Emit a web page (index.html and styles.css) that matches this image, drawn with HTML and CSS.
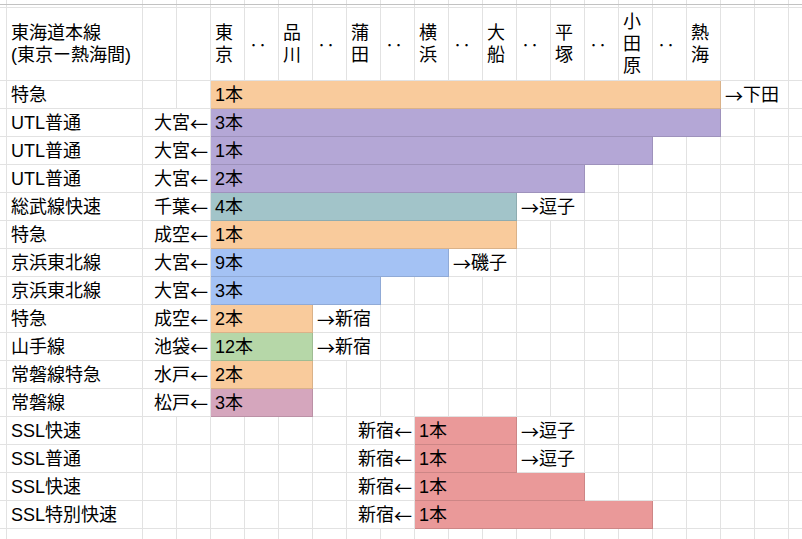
FILE: index.html
```html
<!DOCTYPE html>
<html lang="ja">
<head>
<meta charset="utf-8">
<title>東海道本線</title>
<link rel="stylesheet" href="styles.css">
</head>
<body>
<div class="sheet">
  <div class="row row-top"></div>
  <div class="row row-gap"></div>
  <div class="row row-head">
    <div class="cell hcell lbl"><span>東海道本線<br>(東京ー熱海間)</span></div>
    <div class="cell hcell first-station"><span>東<br>京</span></div>
    <div class="cell hcell"><span class="dots">‥</span></div>
    <div class="cell hcell"><span>品<br>川</span></div>
    <div class="cell hcell"><span class="dots">‥</span></div>
    <div class="cell hcell"><span>蒲<br>田</span></div>
    <div class="cell hcell"><span class="dots">‥</span></div>
    <div class="cell hcell"><span>横<br>浜</span></div>
    <div class="cell hcell"><span class="dots">‥</span></div>
    <div class="cell hcell"><span>大<br>船</span></div>
    <div class="cell hcell"><span class="dots">‥</span></div>
    <div class="cell hcell"><span>平<br>塚</span></div>
    <div class="cell hcell"><span class="dots">‥</span></div>
    <div class="cell hcell"><span>小<br>田<br>原</span></div>
    <div class="cell hcell"><span class="dots">‥</span></div>
    <div class="cell hcell"><span>熱<br>海</span></div>
  </div>

  <div class="row">
    <div class="cell lbl">特急</div>
    <div class="cell bar orange from-tokyo to-atami">1本</div>
    <div class="cell cover dest-atami"><span class="arrow">→</span>下田</div>
  </div>
  <div class="row">
    <div class="cell lbl">UTL普通</div>
    <div class="cell right cover src">大宮<span class="arrow">←</span></div>
    <div class="cell bar purple from-tokyo to-atami">3本</div>
  </div>
  <div class="row">
    <div class="cell lbl">UTL普通</div>
    <div class="cell right cover src">大宮<span class="arrow">←</span></div>
    <div class="cell bar purple from-tokyo to-odawara">1本</div>
  </div>
  <div class="row">
    <div class="cell lbl">UTL普通</div>
    <div class="cell right cover src">大宮<span class="arrow">←</span></div>
    <div class="cell bar purple from-tokyo to-hiratsuka">2本</div>
  </div>
  <div class="row">
    <div class="cell lbl">総武線快速</div>
    <div class="cell right cover src">千葉<span class="arrow">←</span></div>
    <div class="cell bar teal from-tokyo to-ofuna">4本</div>
    <div class="cell cover dest-ofuna"><span class="arrow">→</span>逗子</div>
  </div>
  <div class="row">
    <div class="cell lbl">特急</div>
    <div class="cell right cover src">成空<span class="arrow">←</span></div>
    <div class="cell bar orange from-tokyo to-ofuna">1本</div>
  </div>
  <div class="row">
    <div class="cell lbl">京浜東北線</div>
    <div class="cell right cover src">大宮<span class="arrow">←</span></div>
    <div class="cell bar blue from-tokyo to-yokohama">9本</div>
    <div class="cell cover dest-yokohama"><span class="arrow">→</span>磯子</div>
  </div>
  <div class="row">
    <div class="cell lbl">京浜東北線</div>
    <div class="cell right cover src">大宮<span class="arrow">←</span></div>
    <div class="cell bar blue from-tokyo to-kamata">3本</div>
  </div>
  <div class="row">
    <div class="cell lbl">特急</div>
    <div class="cell right cover src">成空<span class="arrow">←</span></div>
    <div class="cell bar orange from-tokyo to-shinagawa">2本</div>
    <div class="cell cover dest-shinagawa"><span class="arrow">→</span>新宿</div>
  </div>
  <div class="row">
    <div class="cell lbl">山手線</div>
    <div class="cell right cover src">池袋<span class="arrow">←</span></div>
    <div class="cell bar green from-tokyo to-shinagawa">12本</div>
    <div class="cell cover dest-shinagawa"><span class="arrow">→</span>新宿</div>
  </div>
  <div class="row">
    <div class="cell lbl">常磐線特急</div>
    <div class="cell right cover src">水戸<span class="arrow">←</span></div>
    <div class="cell bar orange from-tokyo to-shinagawa">2本</div>
  </div>
  <div class="row">
    <div class="cell lbl">常磐線</div>
    <div class="cell right cover src">松戸<span class="arrow">←</span></div>
    <div class="cell bar pink from-tokyo to-shinagawa">3本</div>
  </div>
  <div class="row">
    <div class="cell lbl">SSL快速</div>
    <div class="cell right cover src-shinjuku">新宿<span class="arrow">←</span></div>
    <div class="cell bar red from-yokohama to-ofuna">1本</div>
    <div class="cell cover dest-ofuna"><span class="arrow">→</span>逗子</div>
  </div>
  <div class="row">
    <div class="cell lbl">SSL普通</div>
    <div class="cell right cover src-shinjuku">新宿<span class="arrow">←</span></div>
    <div class="cell bar red from-yokohama to-ofuna">1本</div>
    <div class="cell cover dest-ofuna"><span class="arrow">→</span>逗子</div>
  </div>
  <div class="row">
    <div class="cell lbl">SSL快速</div>
    <div class="cell right cover src-shinjuku">新宿<span class="arrow">←</span></div>
    <div class="cell bar red from-yokohama to-hiratsuka">1本</div>
  </div>
  <div class="row">
    <div class="cell lbl">SSL特別快速</div>
    <div class="cell right cover src-shinjuku">新宿<span class="arrow">←</span></div>
    <div class="cell bar red from-yokohama to-odawara">1本</div>
  </div>
  <div class="row row-last"></div>
</div>
</body>
</html>
```

FILE: styles.css
```css
html, body {
  margin: 0;
  padding: 0;
  background: #fff;
}

body {
  font-family: "Liberation Sans", "Noto Sans CJK JP", sans-serif;
  font-size: 18px;
  color: #000;
  overflow: hidden;
}

.sheet {
  width: 802px;
  height: 539px;
  overflow: hidden;
}

.row {
  display: grid;
  grid-template-columns: 7px 136px repeat(19, 34px) 1fr;
  box-sizing: border-box;
  height: 28px;
  border-bottom: 1px solid #e2e2e2;
  background-image:
    linear-gradient(#e2e2e2, #e2e2e2),
    linear-gradient(#e2e2e2, #e2e2e2),
    repeating-linear-gradient(90deg, transparent 0 33px, #e2e2e2 33px 34px);
  background-position: 6px 0, 142px 0, 143px 0;
  background-size: 1px 100%, 1px 100%, 680px 100%;
  background-repeat: no-repeat;
}

.row-top {
  height: 5px;
  border-bottom-color: #c2c2c2;
}

.row-gap {
  height: 3px;
}

.row-head {
  height: 73px;
}

.row-last {
  height: 11px;
  border-bottom: 0;
}

.cell {
  display: flex;
  align-items: center;
  box-sizing: border-box;
  padding: 0 4px;
  white-space: nowrap;
  line-height: 20px;
  min-width: 0;
}

.hcell {
  line-height: 22px;
}

.dots,
.arrow {
  font-family: "Noto Sans CJK JP", sans-serif;
}

.lbl {
  grid-column: 2;
}

.first-station {
  grid-column-start: 5;
}

.right {
  justify-content: flex-end;
  padding-right: 2px;
}

.cover {
  background: #fff;
  margin-right: 1px;
}

.src {
  grid-column: 3 / 5;
}

.src-shinjuku {
  grid-column: 9 / 11;
}

.dest-atami {
  grid-column: 20 / 22;
}

.dest-ofuna {
  grid-column: 14 / 16;
}

.dest-yokohama {
  grid-column: 12 / 14;
}

.dest-shinagawa {
  grid-column: 8 / 10;
}

.bar {
  margin-bottom: -1px;
  border-right: 1px solid rgba(0, 0, 0, 0.12);
  border-bottom: 1px solid rgba(0, 0, 0, 0.12);
}

.from-tokyo { grid-column-start: 5; }
.from-yokohama { grid-column-start: 11; }

.to-atami { grid-column-end: 20; }
.to-odawara { grid-column-end: 18; }
.to-hiratsuka { grid-column-end: 16; }
.to-ofuna { grid-column-end: 14; }
.to-yokohama { grid-column-end: 12; }
.to-kamata { grid-column-end: 10; }
.to-shinagawa { grid-column-end: 8; }

.orange { background-color: #f9cb9c; }
.purple { background-color: #b4a7d6; }
.teal { background-color: #a2c4c9; }
.blue { background-color: #a4c2f4; }
.green { background-color: #b6d7a8; }
.pink { background-color: #d5a6bd; }
.red { background-color: #ea9999; }
```
